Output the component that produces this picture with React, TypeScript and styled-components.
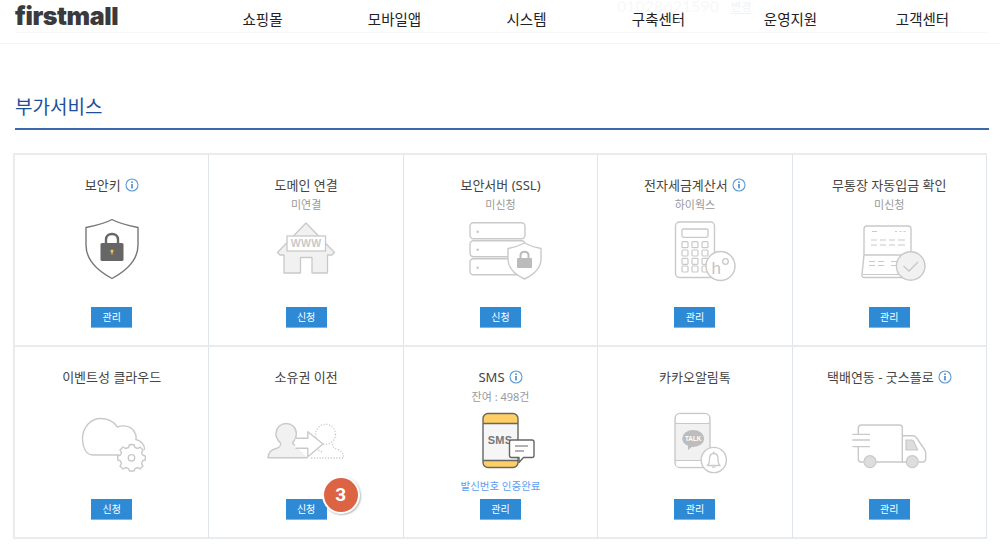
import React from "react";
import styled, { createGlobalStyle } from "styled-components";

const Global = createGlobalStyle`
  html, body { margin: 0; padding: 0; background: #fff; }
  body { width: 1000px; height: 548px; overflow: hidden; font-family: "Noto Sans", "Noto Sans CJK KR", sans-serif; }
  * { box-sizing: border-box; }
`;

const Page = styled.div`
  width: 1000px;
  height: 548px;
  position: relative;
  overflow: hidden;
`;
const Header = styled.header`
  height: 44px;
  padding: 0 10px 0 15px;
  border-bottom: 1px solid #f3f4f5;
  position: relative;
`;
const HeaderInner = styled.div`
  height: 33px;
  display: flex;
  align-items: flex-start;
  justify-content: space-between;
  border-bottom: 1px solid #f8f8f8;
`;
const Logo = styled.div`
  font-family: "Inter", "Roboto", sans-serif;
  font-weight: 900;
  font-size: 25px;
  line-height: 32px;
  letter-spacing: -0.45px;
  color: #3a3a3c;
`;
const Nav = styled.nav`
  display: flex;
  width: 792px;
  margin-right: 1.5px;
`;
const NavItem = styled.a`
  flex: 1;
  margin-top: 10px;
  text-align: center;
  font-size: 14.5px;
  line-height: 18px;
  color: #222;
`;
const GhostPhone = styled.div`
  position: absolute;
  left: 617px;
  top: 0;
  display: flex;
  gap: 12px;
  font-family: "Lato", sans-serif;
  font-size: 16px;
  line-height: 12px;
  color: #f8f8f8;
`;
const GhostLink = styled.span`
  font-family: "Noto Sans CJK KR", sans-serif;
  font-size: 11px;
  line-height: 12px;
  height: 14px;
  color: #eef3fa;
  border-bottom: 1px solid #eef3fa;
`;
const Section = styled.main`
  padding: 50px 11px 0 13px;
`;
const Heading = styled.h2`
  margin: 0 0 23px 2px;
  padding: 0 0 8px;
  font-size: 19px;
  font-weight: 400;
  line-height: 26px;
  color: #1c4f9c;
  border-bottom: 2px solid #3c68a8;
`;
const Grid = styled.div`
  width: 974px;
  display: grid;
  grid-template-columns: repeat(5, 1fr);
  grid-auto-rows: 192px;
  border-top: 2px solid #e8ecee;
  border-left: 2px solid #e8ecee;
`;
const Cell = styled.section`
  display: flex;
  flex-direction: column;
  align-items: center;
  padding-top: 20px;
  border-right: 1px solid #dfe4e8;
  border-bottom: 2px solid #e8ecee;
`;
const Title = styled.div`
  display: flex;
  align-items: center;
  gap: 4px;
  height: 20px;
  font-size: 13px;
  line-height: 20px;
  color: #444;
  white-space: nowrap;
`;
const Sub = styled.div`
  height: 18px;
  font-size: 11px;
  line-height: 20px;
  color: #999;
`;
const IconBox = styled.svg`
  display: block;
  width: 100px;
  height: 70px;
  margin-top: 1px;
  flex: none;
`;
const Note = styled.div`
  height: 20px;
  font-size: 10.5px;
  line-height: 20px;
  color: #5a9cf2;
`;
const ActionWrap = styled.div`
  position: relative;
  margin-top: 3px;
`;
const ActionButton = styled.button`
  display: block;
  width: 41px;
  height: 21px;
  padding: 0;
  border: 0;
  border-bottom: 1px solid #7fb4e4;
  background: #2f8ad6;
  color: #fff;
  font-family: inherit;
  font-size: 10px;
  line-height: 20px;
`;
const Badge = styled.span`
  position: absolute;
  left: 38px;
  top: -21px;
  width: 34px;
  height: 34px;
  border-radius: 50%;
  background: #dc6445;
  color: #fff;
  font-family: "Roboto", sans-serif;
  font-weight: 700;
  font-size: 19px;
  line-height: 34px;
  text-align: center;
  box-shadow: 0 0 0 2px #fff, 1px 1px 2px 2px rgba(0, 0, 0, 0.28);
`;

const G = "#c9c9c9";
const F = "#f1f1f1";

const Info = () => (
  <svg width="14" height="14" viewBox="0 0 14 14" fill="none">
    <circle cx="7" cy="7" r="6" stroke="#5b9bd5" strokeWidth="1.1" />
    <circle cx="7" cy="4.2" r="0.9" fill="#4a86c0" />
    <rect x="6.2" y="6" width="1.6" height="4.4" fill="#4a86c0" />
  </svg>
);

const ShieldIcon = () => (
  <IconBox viewBox="0 0 100 70" fill="none">
    <path d="M50 5.5C57 9.5 66 11.5 76 13.5V31C76 47 63 57.5 50 64.5C37 57.5 24 47 24 31V13.5C34 11.5 43 9.5 50 5.5Z" stroke="#777" strokeWidth="1.4" fill="#fff" />
    <path d="M44 30V25.5C44 22 46.5 20 50 20C53.5 20 56 22 56 25.5V30" stroke="#666" strokeWidth="2.4" />
    <rect x="38.5" y="29" width="23" height="18" rx="1.5" fill="#666" />
    <circle cx="50" cy="37" r="1.6" fill="#f3c04f" />
    <rect x="49.4" y="37.5" width="1.2" height="3" fill="#f3c04f" />
  </IconBox>
);
const HouseIcon = () => (
  <IconBox viewBox="0 0 100 70" fill="none">
    <path d="M50 9L78.5 38.5L76 41H71.5V59H56V43.5H44.5V59H28V41H24L21.5 38.5Z" fill={F} stroke={G} strokeWidth="1.3" strokeLinejoin="round" />
    <rect x="31" y="22" width="38.5" height="15" fill="#fff" stroke={G} strokeWidth="1.3" />
    <text x="50.2" y="33.3" textAnchor="middle" fontFamily="Liberation Sans, sans-serif" fontWeight="700" fontSize="10.5" letterSpacing="0.4" fill="#c9c9c9">WWW</text>
  </IconBox>
);
const ServerIcon = () => (
  <IconBox viewBox="0 0 100 70" fill="none">
    {[8.7, 26.7, 44.7].map((y) => (
      <g key={y}>
        <rect x="20" y={y} width="55" height="16" rx="3.5" fill="#fff" stroke={G} strokeWidth="1.4" />
        <circle cx="27.7" cy={y + 9} r="1.3" fill={G} />
      </g>
    ))}
    <path d="M74.5 29C80 32 85 33.5 91 34.5V45C91 55 83 61 74.5 65C66 61 58 55 58 45V34.5C64 33.5 69 32 74.5 29Z" fill="#fff" stroke={G} strokeWidth="1.4" />
    <path d="M70.5 45V41.5C70.5 39 72 37.8 74.5 37.8C77 37.8 78.5 39 78.5 41.5V45" stroke="#bbb" strokeWidth="2" />
    <rect x="67" y="44" width="15" height="10" rx="1" fill="#bbb" />
  </IconBox>
);
const CalcIcon = () => (
  <IconBox viewBox="0 0 100 70" fill="none">
    <rect x="30.5" y="8" width="39" height="55.5" rx="4" fill="#fff" stroke={G} strokeWidth="1.4" />
    <rect x="37" y="15" width="26" height="8.3" rx="1.5" stroke={G} strokeWidth="1.3" />
    {[27.7, 36, 44.3, 52].map((y) =>
      [37, 47, 57].map((x) => (
        <rect key={`${x}-${y}`} x={x} y={y} width="6" height="6" rx="1" stroke={G} strokeWidth="1.2" />
      ))
    )}
    <circle cx="75.5" cy="52" r="14.5" fill="#fff" stroke={G} strokeWidth="1.4" />
    <text x="66.5" y="60" fontFamily="Liberation Sans, sans-serif" fontSize="17" fill="#c4c4c4">h</text>
    <circle cx="80.5" cy="47.5" r="2.8" stroke={G} strokeWidth="1.3" />
  </IconBox>
);
const BookIcon = () => (
  <IconBox viewBox="0 0 100 70" fill="none">
    <path d="M25 41V15C25 13 26 12 28 12H69C71 12 72 13 72 15V40" fill="#fff" stroke={G} strokeWidth="1.4" />
    <path d="M25 41H70L72 60V63.5H25C23.5 63.5 22.5 62 23 60.5Z" fill="#fff" stroke={G} strokeWidth="1.4" />
    <path d="M24 60.5H70" stroke={G} strokeWidth="1.2" />
    <path d="M33 17.5H38M56 17.5H58M60.5 17.5H62.5M64.5 17.5H66.5M32 26H38M41 26H47M50 26H56M59 26H66M32 31H38M41 31H47M50 31H56M59 31H66M30 47.5H36M39 47.5H45M30 51.5H36M39 51.5H45M52 47.5H58M52 51.5H58" stroke={G} strokeWidth="1" />
    <circle cx="71.7" cy="52" r="14.3" fill={F} stroke={G} strokeWidth="1.4" />
    <path d="M64.5 52L70 57L79 48" stroke={G} strokeWidth="1.4" />
  </IconBox>
);
const CloudIcon = () => (
  <IconBox viewBox="0 0 100 70" fill="none">
    <path d="M57 49H31C24 49 20.5 41 20.5 33C20.5 21 29 12.5 38.5 12.5C46 12.5 52 16 55.5 21C60 19 68 19.5 71.5 24.5C74 28 74.5 31 74 33.5C79 34.5 83 39 82.5 44" stroke={G} strokeWidth="1.4" />
    <path d="M69.5 38.5L72 38.7L73 41.5L76 42.5L78 41L81 44L79.5 46.3L80.7 49.2L83.3 50V54L80.7 54.7L79.5 57.6L81 60L78 63L76 61.5L73 62.7L72 65H67.5L66.5 62.7L63.5 61.5L61 63L58 60L59.5 57.6L58.3 54.7L55.7 54V50L58.3 49.2L59.5 46.3L58 44L61 41L63.5 42.5L66.5 41.5L67.5 38.7Z" fill="#fff" stroke={G} strokeWidth="1.4" strokeLinejoin="round" />
    <circle cx="69.5" cy="51.8" r="3.2" stroke={G} strokeWidth="1.4" />
  </IconBox>
);
const TransferIcon = () => (
  <IconBox viewBox="0 0 100 70" fill="none">
    <path d="M51.8 51.7H12C12.5 46 15 44 20 42.5C24 41.2 25 40 24.5 37C21.5 34 19.5 31 20 27C20.5 21 25 17.5 30.2 17.5C35.5 17.5 40 21 40.3 27C40.6 31 39 34 36.5 37L39 39.5" fill={F} stroke={G} strokeWidth="1.4" strokeLinejoin="round" />
    <circle cx="69.5" cy="28.3" r="10" stroke={G} strokeWidth="1.3" strokeDasharray="1.2 1.6" />
    <path d="M62 40C58 42.5 62 44 66 46M76.5 38C76 41 79 42.5 83 44C86 45.5 87.5 48 87.5 52H55" stroke={G} strokeWidth="1.3" strokeDasharray="1.2 1.6" />
    <path d="M39.5 32.3H51.8V25.7L67 38L51.8 50.7V42.3H39.5" fill="#fff" stroke={G} strokeWidth="1.4" strokeLinejoin="round" />
  </IconBox>
);
const SmsIcon = () => (
  <IconBox viewBox="0 0 100 70" fill="none">
    <rect x="33" y="7.5" width="35" height="54" rx="5" fill="#f6f6f6" />
    <path d="M33 17.5V12.5C33 9.5 35 7.5 38 7.5H63C66 7.5 68 9.5 68 12.5V17.5Z" fill="#ffcf66" />
    <path d="M33 54.5V56.5C33 59.5 35 61.5 38 61.5H63C66 61.5 68 59.5 68 56.5V54.5Z" fill="#ffcf66" />
    <rect x="33" y="7.5" width="35" height="54" rx="5" stroke="#666" strokeWidth="1.4" />
    <path d="M33 17.5H68M33 54.5H68" stroke="#666" strokeWidth="1.4" />
    <text x="50" y="38" textAnchor="middle" fontFamily="Liberation Sans, sans-serif" fontWeight="700" fontSize="11" letterSpacing="0.2" fill="#777">SMS</text>
    <path d="M61.5 34H82C83.2 34 84 34.8 84 36V49.5C84 50.7 83.2 51.5 82 51.5H73.5L69 56.5V51.5H61.5C60.3 51.5 59.5 50.7 59.5 49.5V36C59.5 34.8 60.3 34 61.5 34Z" fill="#fff" stroke="#666" strokeWidth="1.4" strokeLinejoin="round" />
    <path d="M65 40H78M65 45H74" stroke="#666" strokeWidth="1.2" />
  </IconBox>
);
const TalkIcon = () => (
  <IconBox viewBox="0 0 100 70" fill="none">
    <rect x="30" y="7.5" width="35" height="54" rx="5" fill={F} stroke={G} strokeWidth="1.4" />
    <path d="M30.5 17.5H64.5M30.5 54.5H64.5" stroke={G} strokeWidth="1.2" />
    <rect x="31" y="8.3" width="33" height="8.7" rx="3.5" fill="#fff" />
    <rect x="31" y="55" width="33" height="5.8" rx="2.5" fill="#fff" />
    <ellipse cx="48.2" cy="32.5" rx="11" ry="8.5" fill="#bdbdbd" />
    <path d="M43 38.5V44L48 40Z" fill="#bdbdbd" />
    <text x="48.2" y="35" textAnchor="middle" fontFamily="Liberation Sans, sans-serif" fontWeight="700" fontSize="6.4" fill="#fff">TALK</text>
    <circle cx="68.8" cy="54" r="12.6" fill="#fff" stroke={G} strokeWidth="1.4" />
    <path d="M62.5 59.5H75C73.3 58 73 56.5 73 53C73 49.5 71.5 47.5 68.8 47.5C66 47.5 64.5 49.5 64.5 53C64.5 56.5 64.2 58 62.5 59.5Z" stroke={G} strokeWidth="1.3" strokeLinejoin="round" />
    <path d="M67 61.2H70.6M68.8 45.6V47" stroke={G} strokeWidth="1.3" />
  </IconBox>
);
const TruckIcon = () => (
  <IconBox viewBox="0 0 100 70" fill="none">
    <path d="M19.3 28V22C19.3 20 20.3 19 22.3 19H60.5C62.3 19 63.3 20 63.3 22V56H37M25 56H22.3C20.3 56 19.3 55 19.3 53V41" stroke={G} strokeWidth="1.4" />
    <path d="M13.3 28.3H31M13.3 34H31M13.3 40.7H31" stroke={G} strokeWidth="1.3" />
    <path d="M63.3 29.7H74C75.5 29.7 76.5 30.3 77.3 31.5L85.5 43.5C86.3 44.7 86.7 45.5 86.7 47V53C86.7 55 85.7 56 83.7 56H80M63.3 56H67" stroke={G} strokeWidth="1.4" />
    <path d="M67 34H72.5C73.5 34 74 34.3 74.7 35.2L78.7 44H67Z" fill="#ddd" stroke={G} strokeWidth="1.2" />
    <circle cx="31" cy="55.7" r="6" fill="#ddd" stroke={G} strokeWidth="1.2" />
    <circle cx="73.3" cy="55.7" r="6" fill="#ddd" stroke={G} strokeWidth="1.2" />
  </IconBox>
);

type Service = {
  title: string;
  info?: boolean;
  sub?: string;
  note?: string;
  action: string;
  badge?: string;
  Icon: React.FC;
};

const services: Service[] = [
  { title: "보안키", info: true, action: "관리", Icon: ShieldIcon },
  { title: "도메인 연결", sub: "미연결", action: "신청", Icon: HouseIcon },
  { title: "보안서버 (SSL)", sub: "미신청", action: "신청", Icon: ServerIcon },
  { title: "전자세금계산서", info: true, sub: "하이웍스", action: "관리", Icon: CalcIcon },
  { title: "무통장 자동입금 확인", sub: "미신청", action: "관리", Icon: BookIcon },
  { title: "이벤트성 클라우드", action: "신청", Icon: CloudIcon },
  { title: "소유권 이전", action: "신청", badge: "3", Icon: TransferIcon },
  { title: "SMS", info: true, sub: "잔여 : 498건", note: "발신번호 인증완료", action: "관리", Icon: SmsIcon },
  { title: "카카오알림톡", action: "관리", Icon: TalkIcon },
  { title: "택배연동 - 굿스플로", info: true, action: "관리", Icon: TruckIcon },
];

const menu = ["쇼핑몰", "모바일앱", "시스템", "구축센터", "운영지원", "고객센터"];

export default function App() {
  return (
    <Page>
      <Global />
      <Header>
        <HeaderInner>
          <Logo>firstmall</Logo>
          <Nav>
            {menu.map((m) => (
              <NavItem key={m}>{m}</NavItem>
            ))}
          </Nav>
        </HeaderInner>
        <GhostPhone>
          01028621590 <GhostLink>변경</GhostLink>
        </GhostPhone>
      </Header>
      <Section>
        <Heading>부가서비스</Heading>
        <Grid>
          {services.map(({ title, info, sub, note, action, badge, Icon }) => (
            <Cell key={title}>
              <Title>
                {title}
                {info && <Info />}
              </Title>
              <Sub>{sub}</Sub>
              <Icon />
              <Note>{note}</Note>
              <ActionWrap>
                <ActionButton>{action}</ActionButton>
                {badge && <Badge>{badge}</Badge>}
              </ActionWrap>
            </Cell>
          ))}
        </Grid>
      </Section>
    </Page>
  );
}
